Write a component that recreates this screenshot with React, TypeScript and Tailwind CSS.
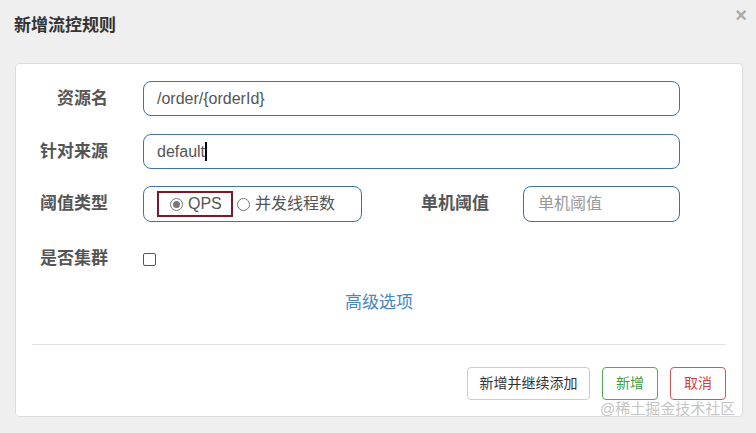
export default function App() {
  const font = { fontFamily: '"Liberation Sans", "Noto Sans CJK SC", sans-serif' }

  return (
    <div className="relative w-[756px] h-[433px] bg-[#efefef] overflow-hidden text-[#555]" style={font}>
      {/* Header */}
      <div className="flex items-start justify-between pl-[14px] pr-[9px] pt-[15px] h-[63px]">
        <h1 className="text-[17px] font-bold text-[#333] leading-[22px]">新增流控规则</h1>
        <span className="text-[20px] leading-[14px] font-bold text-[#aaa] -mt-[7px]">×</span>
      </div>

      {/* Card */}
      <div className="ml-[15px] w-[728px] h-[354px] bg-white rounded-[4px] border border-[#dcdcdc] px-[16px] pt-[17px] flex flex-col">
        <div className="flex items-center h-[35px]">
          <label className="w-[76px] text-right text-[17px] font-bold">资源名</label>
          <div className="ml-[35px] w-[537px] h-[35px] rounded-[8px] border border-[#3f73a3] flex items-center px-[13px] text-[16px]">
            /order/{'{'}orderId{'}'}
          </div>
        </div>

        <div className="flex items-center h-[35px] mt-[18px]">
          <label className="w-[76px] text-right text-[17px] font-bold">针对来源</label>
          <div className="ml-[35px] w-[537px] h-[35px] rounded-[8px] border border-[#3f73a3] flex items-center px-[13px] text-[16px]">
            default
            <span className="w-[2px] h-[19px] bg-black" />
          </div>
        </div>

        <div className="flex items-center h-[36px] mt-[17px]">
          <label className="w-[76px] text-right text-[17px] font-bold">阈值类型</label>
          <div className="ml-[35px] w-[219px] h-[36px] rounded-[8px] border border-[#3f73a3] flex items-center pl-[13px] text-[16px]">
            <div className="flex items-center h-[26px] w-[76px] border-2 border-[#7a1a26] pl-[11px]">
              <span className="w-[13px] h-[13px] rounded-full border border-[#777] flex items-center justify-center">
                <span className="w-[7px] h-[7px] rounded-full bg-[#777]" />
              </span>
              <span className="ml-[5px]">QPS</span>
            </div>
            <span className="ml-[4px] w-[13px] h-[13px] rounded-full border border-[#777]" />
            <span className="ml-[5px]">并发线程数</span>
          </div>
          <label className="w-[127px] text-right text-[17px] font-bold">单机阈值</label>
          <div className="ml-[34px] w-[157px] h-[36px] rounded-[8px] border border-[#3f73a3] flex items-center px-[14px] text-[16px] text-[#999]">
            单机阈值
          </div>
        </div>

        <div className="flex items-center h-[36px] mt-[19px]">
          <label className="w-[76px] text-right text-[17px] font-bold">是否集群</label>
          <span className="ml-[35px] w-[13px] h-[13px] rounded-[2px] border border-[#555]" />
        </div>

        <div className="mt-[13px] h-[26px] flex items-center justify-center">
          <span className="text-[17px] text-[#4a86c0]">高级选项</span>
        </div>

        <div className="mt-[28px] border-t border-[#e0e0e0]" />

        <div className="mt-[22px] flex justify-end gap-[12px] text-[14px]">
          <button className="h-[33px] w-[123px] rounded-[4px] border border-[#ccc] text-[#333] bg-white">新增并继续添加</button>
          <button className="h-[33px] w-[56px] rounded-[4px] border border-[#4cae4c] text-[#449d44] bg-white">新增</button>
          <button className="h-[33px] w-[56px] rounded-[4px] border border-[#d9534f] text-[#d43f3a] bg-white">取消</button>
        </div>
      </div>

      {/* Watermark */}
      <span className="absolute left-[600px] top-[399px] text-[15px] leading-[20px] text-[#c4c4c4]">@稀土掘金技术社区</span>
    </div>
  )
}
